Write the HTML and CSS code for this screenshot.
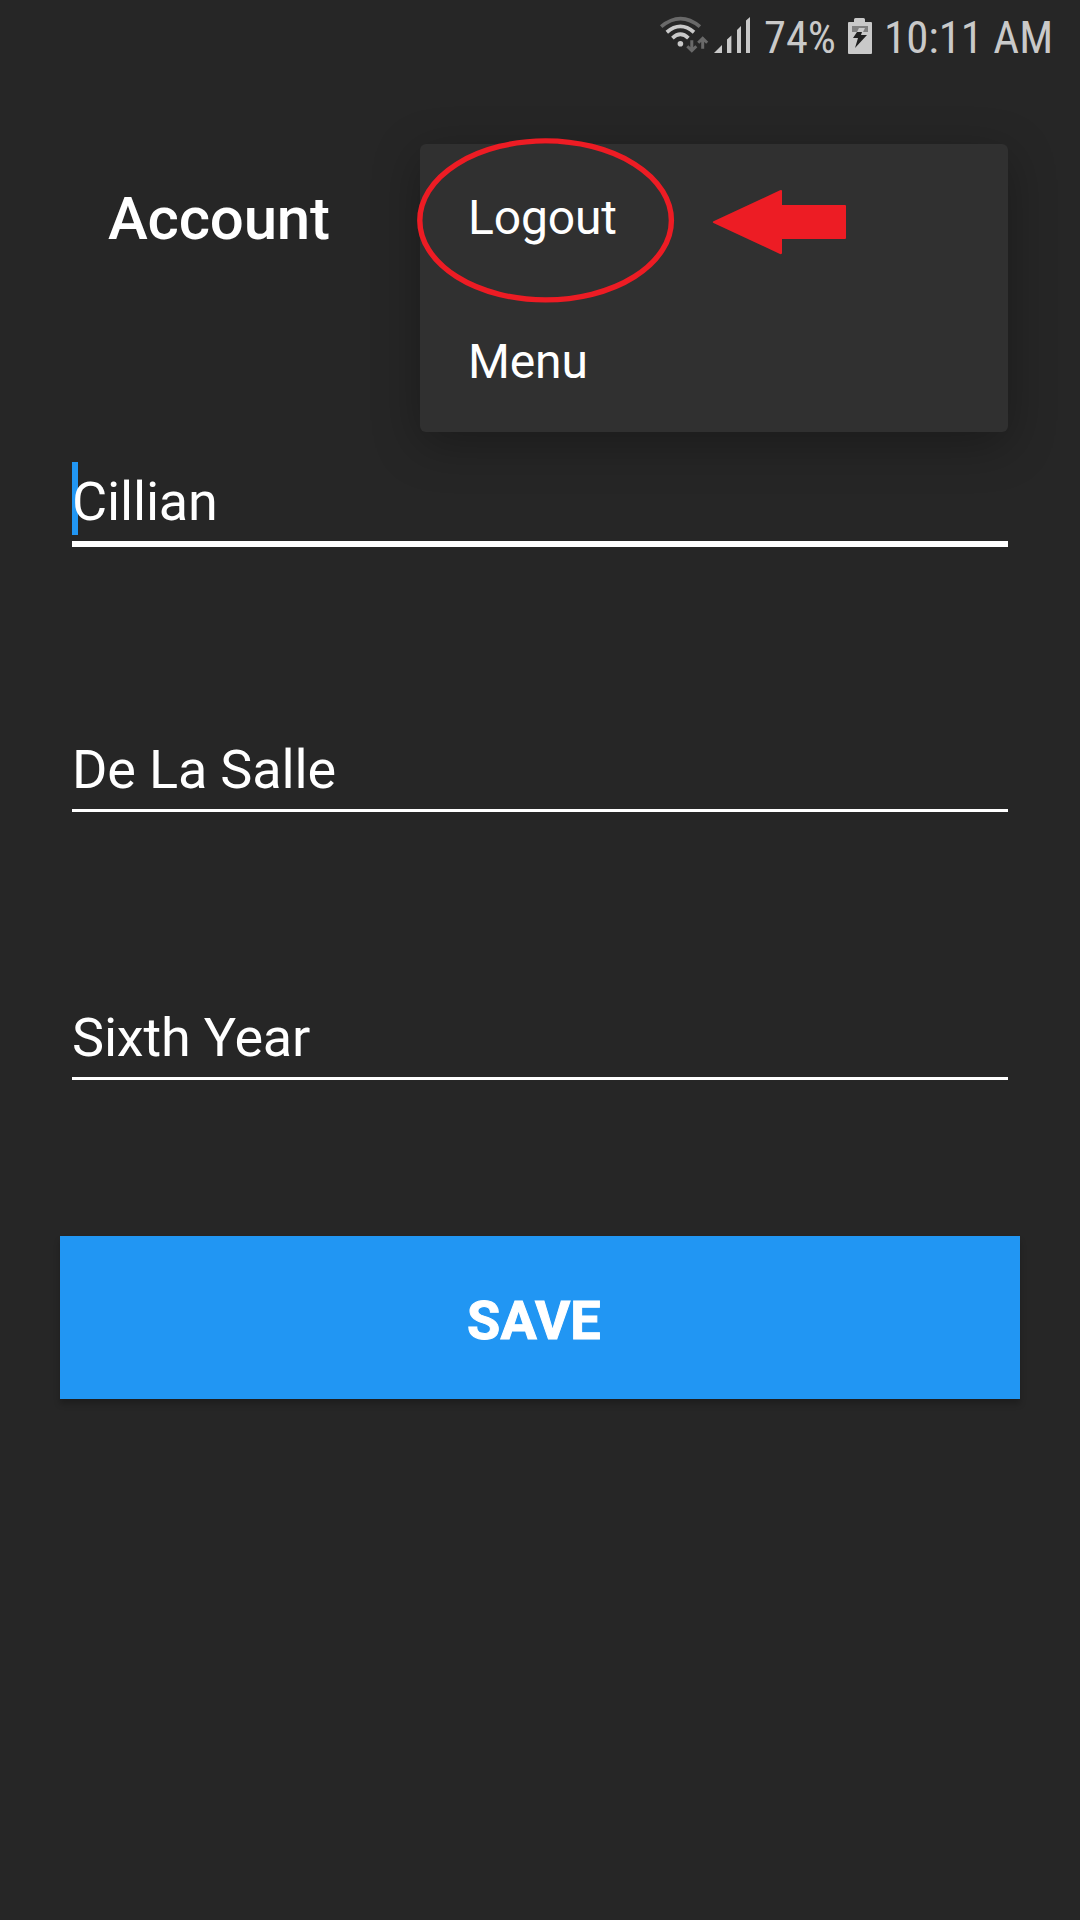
FILE: index.html
```html
<!DOCTYPE html>
<html lang="en">
<head>
<meta charset="utf-8">
<title>Account</title>
<link rel="stylesheet" href="styles.css">
</head>
<body>
<div class="screen">
  <div class="status">
    <svg class="status-icons" viewBox="656 0 98 72" width="98" height="72">
      <g fill="none" stroke-width="3.8">
        <path class="dim-line" d="M661.2 26.6Q680.4 10.6 699.9 26.6"/>
        <path class="line" d="M666.8 32.2Q680.4 20.6 694 32.2"/>
        <path class="line" d="M672.4 38.1Q680.4 30.6 688.4 38.1"/>
      </g>
      <circle class="fill" cx="680.4" cy="43.8" r="2.8"/>
      <path class="dim-line" fill="none" stroke-width="3" d="M691.8 40.3V50M687.3 46.2L691.8 50.7L696.3 46.2M702.7 48.7V39M698.2 42.8L702.7 38.3L707.2 42.8"/>
      <path class="fill" d="M714 53L722 45V53ZM727 53V39.5L731.4 35.5V53ZM737 53V30L741 26V53ZM746 53V20.5L750 17V53Z"/>
    </svg>
    <svg class="percent" viewBox="0 0 72 72" width="72" height="72"><text x="0" y="52.8" textLength="72" lengthAdjust="spacingAndGlyphs">74%</text></svg>
    <svg class="battery" viewBox="846 0 28 72" width="28" height="72">
      <path class="fill" d="M849 22H854V19.5Q854 18 855.5 18H863.5Q865 18 865 19.5V22H871Q872 22 872 23V53Q872 54 871 54H849Q848 54 848 53V23Q848 22 849 22Z"/>
      <path class="dim" d="M852 26H868V32H852Z"/>
      <path class="fill" d="M859 28H865L862 34H856Z"/>
      <path class="bolt" d="M857 32H862L861 35H867L855 48L858 38H853Z"/>
    </svg>
    <svg class="time" viewBox="0 0 170 72" width="170" height="72"><text x="0" y="52.8" textLength="169" lengthAdjust="spacingAndGlyphs">10:11 AM</text></svg>
  </div>
  <header class="header"><h1>Account</h1></header>
  <main class="form">
    <div class="field focused">Cillian<span class="caret"></span></div>
    <div class="field">De La Salle</div>
    <div class="field">Sixth Year</div>
  </main>
  <button class="save">SAVE</button>
  <div class="menu">
    <div class="item">Logout</div>
    <div class="item">Menu</div>
  </div>
  <svg class="marks" viewBox="410 130 450 180" width="450" height="180">
    <ellipse cx="545.6" cy="220.4" rx="125.8" ry="79.5"/>
    <path d="M713.5 221.2L780 190.3Q782 189.5 782 191V205H845Q846 205 846 206V238Q846 239 845 239H782V253Q782 254.6 780 254L713.5 223Q712 222 713.5 221.2Z"/>
  </svg>
</div>
</body>
</html>
```
FILE: styles.css
```css
* { box-sizing: border-box; }
body {
  margin: 0;
  background: #262626;
  color: #fff;
  font-family: Roboto, sans-serif;
}
.screen {
  position: relative;
  display: flex;
  flex-direction: column;
  width: 1080px;
  height: 1920px;
  overflow: hidden;
}
.status {
  display: flex;
  height: 72px;
  padding-left: 656px;
}
.status svg { flex: none; }
.status text {
  font-family: "Roboto Condensed", Roboto, sans-serif;
  font-stretch: 75%;
  font-size: 44.5px;
  fill: #c9c9c9;
}
.percent { margin-left: 10px; }
.battery { margin-left: 10px; }
.time { margin-left: 10px; }
.fill { fill: #c9c9c9; }
.dim { fill: #808080; }
.line { stroke: #c9c9c9; }
.dim-line { stroke: #696969; }
.bolt { fill: #202020; }
.header {
  display: flex;
  align-items: center;
  height: 293px;
  padding-left: 108px;
}
.header h1 {
  margin: 0;
  font-size: 60px;
  font-weight: 500;
  letter-spacing: -.2px;
}
.form {
  display: grid;
  grid-template-rows: 268px 268px auto;
  align-items: start;
  padding: 97px 72px 0;
}
.field {
  position: relative;
  font-size: 54px;
  line-height: 79px;
  letter-spacing: -.16px;
  border-bottom: 3px solid #fff;
}
.focused { border-bottom-width: 6px; }
.caret {
  position: absolute;
  z-index: -1;
  left: 0;
  top: 0;
  width: 6px;
  height: 73px;
  background: #2196f3;
}
.save {
  height: 163px;
  margin: 156px 60px 0;
  padding: 6px 12px 0 0;
  border: 0;
  background: #2196f3;
  color: #fff;
  font: 700 54px Roboto, sans-serif;
  letter-spacing: .2px;
  -webkit-text-stroke: 1px #fff;
  box-shadow: 0 5px 6px rgba(0, 0, 0, .22);
}
.menu {
  position: absolute;
  left: 420px;
  top: 144px;
  width: 588px;
  height: 288px;
  border-radius: 6px;
  background: #303030;
  box-shadow: 0 12px 48px rgba(0, 0, 0, .3);
}
.item {
  height: 144px;
  padding: 2px 48px 0;
  font-size: 48px;
  line-height: 144px;
  letter-spacing: -.15px;
}
.marks {
  position: absolute;
  left: 410px;
  top: 130px;
}
.marks ellipse {
  fill: none;
  stroke: #ed1c24;
  stroke-width: 5.4;
}
.marks path { fill: #ed1c24; }
```
